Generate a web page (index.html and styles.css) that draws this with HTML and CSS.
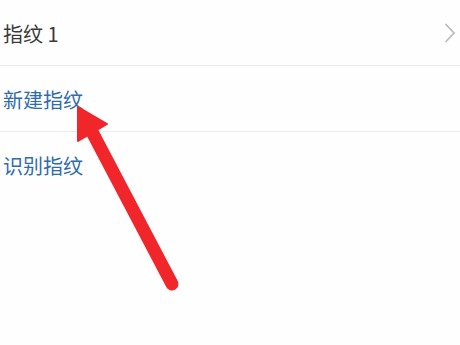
FILE: index.html
```html
<!DOCTYPE html>
<html lang="zh">
<head>
<meta charset="utf-8">
<link rel="stylesheet" href="styles.css">
</head>
<body>
<div class="list">
  <div class="row">
    <span class="label">指纹 1</span>
    <svg class="chev" width="12" height="22" viewBox="0 0 12 22"><path d="M1.5 2 L10 11 L1.5 20" fill="none" stroke="#bdbdbd" stroke-width="1.8"/></svg>
  </div>
  <div class="row"><span class="label link">新建指纹</span></div>
  <div class="row last"><span class="label link">识别指纹</span></div>
</div>
<svg class="arrow" width="460" height="345" viewBox="0 0 460 345">
  <line x1="90" y1="128" x2="172" y2="284" stroke="#f1262b" stroke-width="13" stroke-linecap="round"/>
  <polygon points="78,107 78,141 107,124" fill="#f1262b" stroke="#f1262b" stroke-width="2" stroke-linejoin="round"/>
</svg>
</body>
</html>
```
FILE: styles.css
```css
html, body {
  margin: 0;
  padding: 0;
  background: #fefefe;
  width: 460px;
  height: 345px;
  overflow: hidden;
  font-family: "Noto Sans CJK SC", "Noto Sans", sans-serif;
}
.list {
  display: flex;
  flex-direction: column;
}
.row {
  height: 65px;
  border-bottom: 1px solid #ebebeb;
  display: flex;
  align-items: center;
  justify-content: space-between;
  padding: 2px 4px 0 3px;
  box-sizing: border-box;
  height: 66px;
}
.row.last {
  border-bottom: none;
}
.label {
  font-size: 20px;
  color: #3a3a3a;
  line-height: 1;
}
.link {
  color: #2f6cab;
}
.chev {
  display: block;
  margin-top: -2px;
}
.arrow {
  position: absolute;
  left: 0;
  top: 0;
}
```
